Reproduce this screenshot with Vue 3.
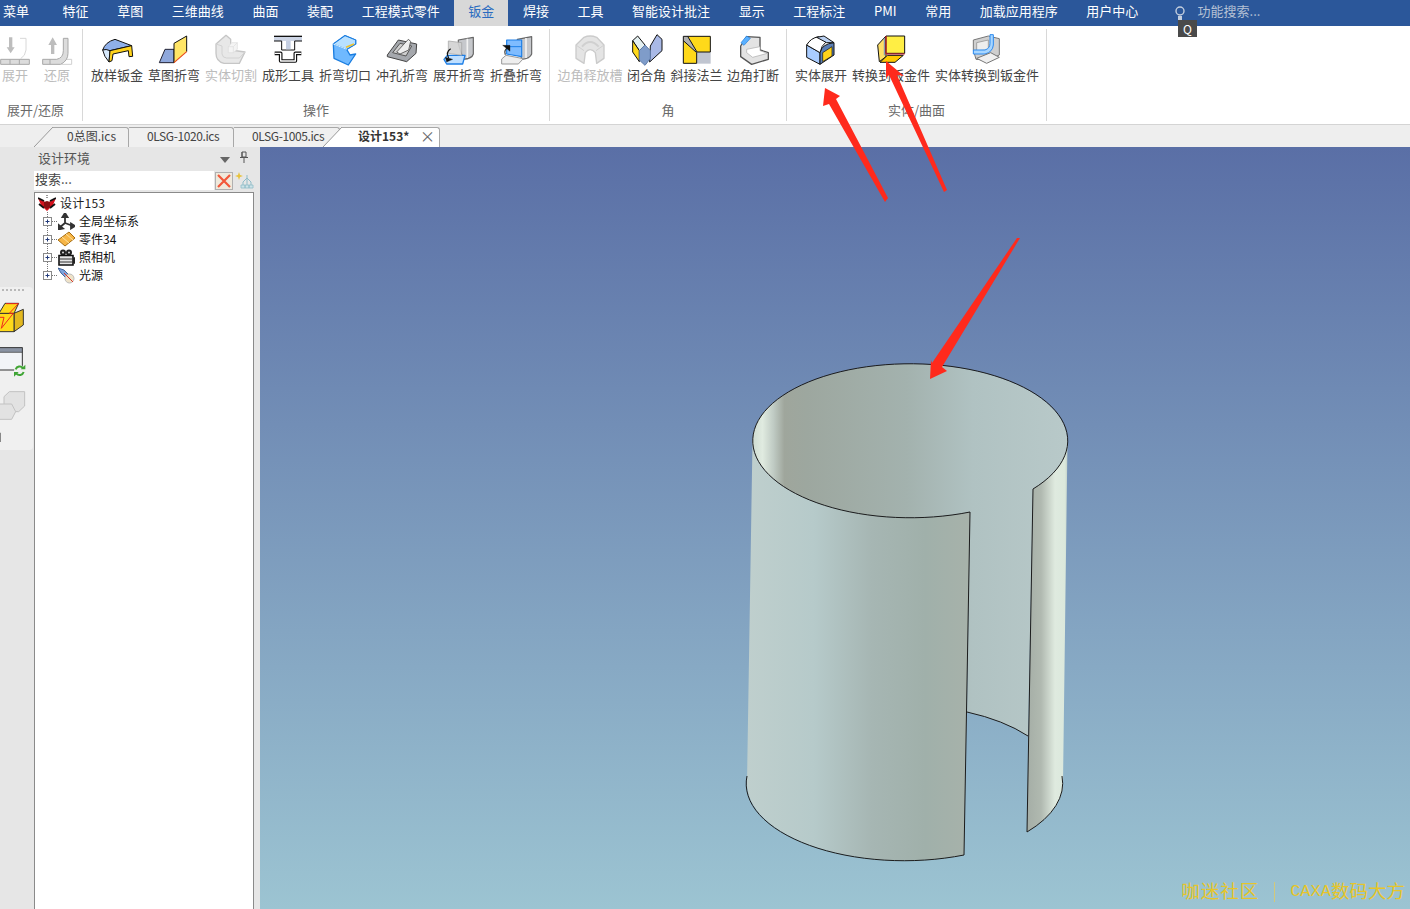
<script setup>
const p = (d, f = 'none', s = 'none', w = 3, o = 1) => ({ d, f, s, w, o })

const menus = ['特征', '草图', '三维曲线', '曲面', '装配', '工程模式零件', '钣金', '焊接', '工具', '智能设计批注', '显示', '工程标注', 'PMI', '常用', '加载应用程序', '用户中心']

const groups = [
  {
    key: 'g1', label: '展开/还原', items: [
      { t: '展开', w: 30, x: -15, off: true, i: [
        p('M27 22H37V52H44L32 70L20 52H27Z', '#bdbdbd'),
        p('M60 25H78V60Q76 78 62 86', '#fff', '#d8d8d8'),
        p('M2 88H88V103H2Z', '#dcdcdc', '#a8a8a8'),
        p('M30 88V103M58 88V103', 'none', '#a8a8a8')
      ] },
      { t: '还原', w: 30, x: 111, off: true, i: [
        p('M153 72V45H145L158 22L171 45H163V72Z', '#bdbdbd'),
        p('M185 88H215V103H185Z', '#fff', '#d0d0d0'),
        p('M190 25H204V70Q204 92 182 103H128V88H170Q190 84 190 62Z', '#dcdcdc', '#a8a8a8'),
        p('M150 88V103', 'none', '#a8a8a8')
      ] }
    ]
  },
  {
    key: 'g2', label: '操作', items: [
      { t: '放样钣金', w: 57, x: 291, i: [
        p('M308 60Q316 36 345 28L395 47L330 62Z', '#8fb0ea', '#111'),
        p('M308 60Q318 56 330 62L327 96Q312 80 308 60Z', '#d6e8fb', '#111'),
        p('M330 62L395 47L398 79L387 80L385 62L339 72L336 92L327 96Z', '#ffd31a', '#111')
      ] },
      { t: '草图折弯', w: 57, x: 462, i: [
        p('M495 58H522V98H478Z', '#8fa8dc', '#223'),
        p('M522 40L560 18V65L522 98Z', '#ffe566'),
        p('M522 98V40L560 18V65', 'none', '#111'),
        p('M522 98L560 65', 'none', '#e8491d', 3.5)
      ] },
      { t: '实体切割', w: 57, x: 33, off: true, i: [
        p('M48 42L78 16L92 28V60L135 66L118 100H72Q48 95 48 70Z', '#e8e8e8', '#c6c6c6', 4),
        p('M48 42L66 48V72Q68 84 80 84H118L135 66', 'none', '#d2d2d2'),
        p('M85 50L95 38H112V58L100 68H85ZM85 50H100V68M100 50L112 38', '#f4f4f4', '#dcdcdc', 2)
      ] },
      { t: '成形工具', w: 57, x: 204, i: [
        p('M222 19H306V33H222Z', '#cdd5e5'),
        p('M222 19H306', 'none', '#111', 4),
        p('M222 33H245V60H284V33H306', 'none', '#111', 3),
        p('M258 33H272V58H258Z', '#c5cfe2'),
        p('M224 70H242V93H286V70H304', 'none', '#111', 11),
        p('M224 70H242V93H286V70H304', 'none', '#fff', 4)
      ] },
      { t: '折弯切口', w: 57, x: 375, i: [
        p('M400 42L435 17L467 30V42L440 58L450 75L467 72L445 105L402 85Z', '#6fb9ff', '#1a7de0', 4),
        p('M400 42L435 17L467 30V42L440 58Z', '#b8e0ff', '#1a7de0', 3),
        p('M400 42L440 58', 'none', '#d4eeff', 3),
        p('M438 52L462 42', 'none', '#f0c22a', 5)
      ] },
      { t: '冲孔折弯', w: 57, x: 6, i: [
        p('M22 75L55 30L110 42L108 70L80 95L22 80Z', '#a5a8ad', '#444'),
        p('M38 68L60 40L95 48L78 78Z', '#cfcfcf', '#555'),
        p('M50 66L85 28L92 34L86 60L60 72Z', '#eee', '#666')
      ] },
      { t: '展开折弯', w: 57, x: 177, i: [
        p('M235 30L280 22V72Q276 86 250 88L235 42Z', '#c6c8cc', '#666', 3.5),
        p('M262 26V84', 'none', '#f2f2f2', 5),
        p('M192 88L202 76H255L248 102H200Z', '#bfdfff', '#1d7fe8', 4),
        p('M205 33L245 38V76L205 70Z', '#d2d2d2', '#a5a5a5', 2.5, .9),
        p('M212 56Q196 66 206 84', 'none', '#111', 3.5),
        p('M196 82L218 88L200 96Z', '#111', '#111', 1)
      ] },
      { t: '折叠折弯', w: 57, x: 348, i: [
        p('M412 28L455 20V72Q450 86 425 88L412 38Z', '#c6c8cc', '#666', 3.5),
        p('M438 24V84', 'none', '#f2f2f2', 5),
        p('M365 87L378 76L430 86L415 102H365Z', '#eee', '#999'),
        p('M380 30H425V80L380 72Z', '#7fbcff', '#1d7fe8', 3.5),
        p('M380 50H425', 'none', '#1d7fe8', 3),
        p('M386 52Q370 60 376 74', 'none', '#333', 3.5),
        p('M368 46H390V64Z', '#111', '#111', 1)
      ] }
    ]
  },
  {
    key: 'g3', label: '角', items: [
      { t: '边角释放槽', w: 65, x: 0, off: true, i: [
        p('M18 45L42 22Q60 14 80 22L102 45V85L80 100L76 68Q60 50 46 68L42 100L18 85Z', '#e4e4e4', '#cbcbcb', 4),
        p('M36 50Q60 22 86 50', 'none', '#d0d0d0', 6),
        p('M18 45L42 62M102 45L78 62', 'none', '#d0d0d0')
      ] },
      { t: '闭合角', w: 39, x: 168, i: [
        p('M185 32L200 18L222 45L205 62Z', '#e3eff0', '#111'),
        p('M185 32L205 62V95L185 66Z', '#ffd91a', '#111'),
        p('M238 48L258 14L273 28V62L236 96Z', '#a9b9e6', '#111'),
        p('M205 62L222 45L238 62V85L222 106L205 90Z', '#7f9cc9', '#5d7aa8')
      ] },
      { t: '斜接法兰', w: 52, x: 318, i: [
        p('M378 66H419V101H378Z', '#c0c5d0'),
        p('M350 19H418V66H378Z', '#ffd91a'),
        p('M337 32L377 68V100H337Z', '#ffd91a'),
        p('M337 19H350L378 66L377 68L337 32Z', '#b0b0b0'),
        p('M337 19H418V66H378M337 19V100H377V68L337 32M350 19L378 66', 'none', '#111')
      ] },
      { t: '边角打断', w: 52, x: 489, i: [
        p('M512 48L530 20L570 22V60L595 68V88L545 103L512 80Z', '#e3e3e3', '#555', 4),
        p('M530 58L570 50V62L592 70L548 82L530 68Z', '#fff', '#aaa', 2),
        p('M513 38L530 18L541 25L522 46Z', '#5ab0ff', '#1a7de0', 2)
      ] }
    ]
  },
  {
    key: 'g4', label: '实体/曲面', items: [
      { t: '实体展开', w: 52, x: 3, i: [
        p('M20 45L60 68V103L20 82Z', '#a9ccff', '#111'),
        p('M60 68Q65 42 102 38V75L60 103Z', '#5b7fb5', '#111'),
        p('M68 68L96 50V78L68 95Z', '#ffd31a', '#111', 2),
        p('M20 45Q32 24 56 20L78 36Q64 46 60 68Z', '#fff', '#111'),
        p('M50 22L72 18L102 38L80 38Z', '#b9d0f2', '#111')
      ] },
      { t: '转换到钣金件', w: 78, x: 213, i: [
        p('M233 45L258 18V80L238 95Z', '#ffe066', '#111'),
        p('M258 18H314V70H258Z', '#ffee44', '#111'),
        p('M258 18V72H314', 'none', '#d9142c', 3),
        p('M240 97L262 76H310L285 97Z', '#ffc800', '#111'),
        p('M253 24V76', 'none', '#6b8fc6', 3)
      ] },
      { t: '实体转换到钣金件', w: 104, x: 501, i: [
        p('M520 30L565 18L598 26V75L565 90L528 88L520 60Z', '#cfcfcf', '#777'),
        p('M530 38L565 30V60L530 62Z', '#eee', '#888', 2),
        p('M520 60H555Q570 55 570 40V14H580V45Q578 66 555 72H520Z', '#a8d6ff', '#2b8af0', 3),
        p('M530 85L572 68L598 82L560 100Z', '#f0f0f0', '#777')
      ] }
    ]
  }
]

const tree = [
  { t: '全局坐标系', k: 'axis' },
  { t: '零件34', k: 'part' },
  { t: '照相机', k: 'cam' },
  { t: '光源', k: 'light' }
]
</script>

<template>
  <div class="app">
    <header class="menu">
      <div class="mi first">菜单</div>
      <div v-for="m in menus" :key="m" class="mi" :class="{ active: m === '钣金' }">{{ m }}</div>
      <svg class="bulb" width="14" height="16" viewBox="0 0 14 16">
        <circle cx="7" cy="6" r="4" fill="none" stroke="#c3cede" stroke-width="1.4" />
        <path d="M5 11H9V15H5Z" fill="#c3cede" />
      </svg>
      <div class="fsearch">功能搜索...</div>
      <div class="qbadge">Q</div>
    </header>

    <section class="ribbon">
      <div v-for="g in groups" :key="g.key" class="group" :class="g.key">
        <div class="items">
          <div v-for="it in g.items" :key="it.t" class="item" :class="{ off: it.off }" :style="{ width: it.w + 'px' }">
            <svg class="ico" width="40" height="40" :viewBox="`${it.x} 0 120 120`">
              <path v-for="(s, n) in it.i" :key="n" :d="s.d" :fill="s.f" :stroke="s.s" :stroke-width="s.w" :opacity="s.o" stroke-linejoin="round" />
            </svg>
            <div class="lbl">{{ it.t }}</div>
          </div>
        </div>
        <div class="glabel">{{ g.label }}</div>
      </div>
    </section>

    <nav class="tabs">
      <svg class="slope" width="19" height="22" viewBox="0 0 19 22"><path d="M0 22L19 2V22Z" fill="#f0f0f0" /><path d="M0 22L19 2" stroke="#999" fill="none" /></svg>
      <div class="tab t1">0总图.ics</div>
      <div class="tab t2">0LSG-1020.ics</div>
      <div class="tab t3">0LSG-1005.ics</div>
      <svg class="slope s4" width="19" height="22" viewBox="0 0 19 22"><path d="M0 22L19 2V22Z" fill="#fff" /><path d="M0 22L19 2" stroke="#999" fill="none" /></svg>
      <div class="tab t4"><b>设计153*</b><span class="x">×</span></div>
    </nav>

    <main class="main">
      <aside class="strip">
        <svg class="stripsvg" width="33" height="163" viewBox="0 21 99 489">
          <path d="M6 30H74" stroke="#a5a5a5" stroke-width="5" stroke-dasharray="6 6" />
          <path d="M42 100L70 88V135L42 155Z" fill="#e3b81f" stroke="#333" stroke-width="3" />
          <path d="M-3 100H42V155H-3Z" fill="#ffd91a" stroke="#333" stroke-width="3" />
          <path d="M15 70H56L42 100H-3Z" fill="#ffd91a" stroke="#333" stroke-width="3" />
          <path d="M18 71H55L28 100H40L4 145L12 112H-3" fill="none" stroke="#ee2a1e" stroke-width="3" />
          <path d="M-3 203H67V270H-3Z" fill="#f2f4f8" stroke="#333" stroke-width="3" />
          <path d="M-3 203H67V217H-3Z" fill="#8a93a3" stroke="#333" stroke-width="2" />
          <circle cx="59" cy="272" r="17" fill="#f0f0f0" />
          <path d="M47 268A13 13 0 0 1 69 264M71 276A13 13 0 0 1 49 281" fill="none" stroke="#3fa535" stroke-width="6" />
          <path d="M62 268H76V254Z M56 276H42V290Z" fill="#3fa535" />
          <path d="M12 350L28 335H74V378L56 395H12Z" fill="#e2e2e2" stroke="#c2c2c2" stroke-width="3" />
          <path d="M-3 372H35L47 395L35 418H-3Z" fill="#e2e2e2" stroke="#c2c2c2" stroke-width="3" />
          <path d="M-3 458H3V486H-3Z" fill="#888" />
        </svg>
      </aside>

      <div class="panel">
        <div class="phead">
          <span>设计环境</span>
          <svg class="tri" width="10" height="6" viewBox="0 0 10 6"><path d="M0 0H10L5 6Z" fill="#666" /></svg>
          <svg class="pin" width="10" height="12" viewBox="0 0 10 12"><path d="M3 1H7V6H3ZM1 6.5H9M5 7V12M3 1V6" fill="none" stroke="#555" /></svg>
        </div>
        <div class="psearch">
          <div class="pinput">搜索...</div>
          <div class="pclear">
            <svg width="14" height="14" viewBox="0 0 14 14"><path d="M1 1L13 13M13 1L1 13" stroke="#f2583a" stroke-width="2.2" /></svg>
          </div>
          <svg class="pfilter" width="19" height="17" viewBox="0 0 19 17">
            <path d="M4 0L5 3L8 4L5 5L4 8L3 5L0 4L3 3Z" fill="#e8c23a" />
            <path d="M12 3V8M8 10L12 6L16 10M8 10V13M16 10V13M12 8V13" fill="none" stroke="#8fbcc8" />
            <path d="M6 13H10V16H6ZM14 13H18V16H14ZM10 13H14V16H10Z" fill="#cfe3e8" stroke="#8fbcc8" stroke-width=".8" />
          </svg>
        </div>
        <div class="tree">
          <div class="trow root">
            <svg width="18" height="17" viewBox="0 0 18 17">
              <path d="M9 0V3" stroke="#333" stroke-dasharray="1 1" />
              <path d="M0 3L9 8L18 3L15 10L9 16L3 10Z" fill="#d4101c" />
              <path d="M0 3L6 6M18 3L12 6M1 9L6 13M17 9L12 13" stroke="#111" stroke-width="1.8" fill="none" />
              <path d="M6 7L9 6L12 7V12L9 14L6 12Z" fill="#8a0d12" />
            </svg>
            <span>设计153</span>
          </div>
          <div v-for="(r, i) in tree" :key="r.t" class="trow">
            <svg class="plus" width="21" height="18" viewBox="0 0 21 18">
              <path :d="i === 3 ? 'M12.5 0V5' : 'M12.5 0V18'" stroke="#777" stroke-dasharray="1 1" fill="none" />
              <path d="M17 9.5H23" stroke="#777" stroke-dasharray="1 1" fill="none" />
              <rect x="8.5" y="5.5" width="8" height="8" fill="#fff" stroke="#8a8a8a" />
              <path d="M10.5 9.5H14.5M12.5 7.5V11.5" stroke="#223a7a" />
            </svg>
            <svg class="ticon" width="17" height="17" viewBox="0 0 17 17">
              <g v-if="r.k === 'axis'" fill="none" stroke="#333" stroke-width="1.8">
                <path d="M7 2V10L1 15M7 10L15 13" />
                <path d="M4.5 4L7 0L9.5 4Z" fill="#333" />
                <path d="M13 10.5L17 13L13 15.5Z" fill="#333" />
                <path d="M0 11.5V16.5L5 15.5Z" fill="#333" />
              </g>
              <g v-else-if="r.k === 'part'">
                <path d="M0 9L11 1L17 7L7 15Z" fill="#f6b546" stroke="#a56c10" />
                <path d="M4 6L11 12M8 3L15 9" stroke="#fde2a0" />
              </g>
              <g v-else-if="r.k === 'cam'">
                <circle cx="5" cy="3.5" r="3" fill="#222" />
                <circle cx="11" cy="3.5" r="3" fill="#222" />
                <circle cx="5" cy="3.5" r="1" fill="#ddd" />
                <circle cx="11" cy="3.5" r="1" fill="#ddd" />
                <path d="M1 6.5H15V16H1Z" fill="#e6e6e6" stroke="#111" stroke-width="1.6" />
                <path d="M1 10H15M1 13H15" stroke="#333" />
                <path d="M15 9L17 8V15L15 14Z" fill="#222" />
              </g>
              <g v-else>
                <path d="M0 1L6 3L11 8L8 11L3 6Z" fill="#7ea4dc" stroke="#274b86" stroke-width=".8" />
                <circle cx="11.5" cy="11.5" r="4.5" fill="#eee2c8" stroke="#bbb" />
                <path d="M6 6L15 15" stroke="#d9342a" />
              </g>
            </svg>
            <span>{{ r.t }}</span>
          </div>
        </div>
      </div>

      <div class="view">
        <svg class="cyl" width="1150" height="762" viewBox="260 147 1150 762">
          <defs>
            <linearGradient id="gIn" gradientUnits="userSpaceOnUse" x1="753" y1="0" x2="1067" y2="0">
              <stop offset="0" stop-color="#cfdcd2" />
              <stop offset=".03" stop-color="#e0ebe0" />
              <stop offset=".065" stop-color="#c0cbc4" />
              <stop offset=".1" stop-color="#9fa69c" />
              <stop offset=".17" stop-color="#9da79f" />
              <stop offset=".49" stop-color="#a3b2ae" />
              <stop offset=".7" stop-color="#b0c2c2" />
              <stop offset="1" stop-color="#b8c9c9" />
            </linearGradient>
            <linearGradient id="gFront" gradientUnits="userSpaceOnUse" x1="747" y1="0" x2="970" y2="0">
              <stop offset="0" stop-color="#bfcfcd" />
              <stop offset=".3" stop-color="#b6caca" />
              <stop offset=".56" stop-color="#a6b6b3" />
              <stop offset=".8" stop-color="#a0b0aa" />
              <stop offset="1" stop-color="#a7b2aa" />
            </linearGradient>
            <linearGradient id="gRight" gradientUnits="userSpaceOnUse" x1="1027" y1="0" x2="1067" y2="0">
              <stop offset="0" stop-color="#a5aea6" />
              <stop offset=".35" stop-color="#b0b9b0" />
              <stop offset=".7" stop-color="#dfeadf" />
              <stop offset=".95" stop-color="#dbe8dc" />
              <stop offset="1" stop-color="#c5d4cc" />
            </linearGradient>
          </defs>
          <path d="M752.5 441A157.5 77 0 0 1 1067.5 441A157.5 77 0 0 1 1033 489L1028 736A158 77 0 0 0 967 712L970 512A157.5 77 0 0 1 752.5 441Z" fill="url(#gIn)" />
          <path d="M752.5 441A157.5 77 0 0 0 970 512L964 855A158 77 0 0 1 747 783Z" fill="url(#gFront)" />
          <path d="M1033 489A157.5 77 0 0 0 1067.5 441L1063 783A158 77 0 0 1 1027 832Z" fill="url(#gRight)" />
          <g fill="none" stroke="#1c1c1c" stroke-width="1">
            <path d="M970 512A157.5 77 0 1 1 1033 489" />
            <path d="M970 512L964 855A158 77 0 0 1 747 776" />
            <path d="M1033 489L1027 832A158 77 0 0 0 1062 776" />
            <path d="M1028 736A158 77 0 0 0 967 712" />
          </g>
        </svg>
        <div class="wm"><span class="wa">咖迷社区</span><i></i><span class="wb">CAXA</span><span>数码大方</span></div>
      </div>
    </main>

    <svg class="arrows" width="1410" height="909" viewBox="0 0 1410 909">
      <path d="M825 88L840 96L836 99L888 198L885 202L829 104L823 106Z" fill="#ff2a1c" />
      <path d="M886 61L904 76L897 75L947 190L944 192L889 75L886 78Z" fill="#ff2a1c" />
      <path d="M930 379L931 360L932 363L1017 238H1020L942 367L947 371Z" fill="#ff2a1c" />
    </svg>
  </div>
</template>

<style scoped>
.app {
  position: relative;
  width: 1410px;
  height: 909px;
  overflow: hidden;
  display: flex;
  flex-direction: column;
  font-family: "Noto Sans CJK SC", sans-serif;
  background: #e6e6e6;
  color: #333;
}
.menu {
  position: relative;
  height: 26px;
  flex: none;
  display: flex;
  align-items: stretch;
  gap: 0.6px;
  background: #2b579a;
  color: #fff;
  font-size: 13px;
  line-height: 21px;
}
.mi {
  padding: 0 14px;
  white-space: nowrap;
}
.mi.first {
  padding: 0 19px 0 3px;
}
.mi.active {
  background: #d8d8d8;
  color: #2b6cc0;
}
.bulb {
  margin: 5px 0 0 20px;
}
.fsearch {
  margin-left: 10px;
  font-size: 13px;
  color: #b4c0d4;
}
.qbadge {
  position: absolute;
  left: 1178px;
  top: 20px;
  width: 19px;
  height: 17px;
  background: #4a4a4a;
  color: #fff;
  font-size: 12px;
  line-height: 17px;
  text-align: center;
}
.ribbon {
  height: 98px;
  flex: none;
  display: flex;
  background: #fff;
  border-bottom: 1px solid #d4d4d4;
}
.group {
  margin: 3px 0;
  display: flex;
  flex-direction: column;
  border-right: 1px solid #d8d8d8;
  box-sizing: border-box;
}
.g1 { width: 89px; margin-left: -6px; padding-left: 6px; }
.g2 { width: 467px; padding-left: 5.5px; }
.g3 { width: 237px; padding-left: 7.5px; }
.g4 { width: 260px; padding-left: 8px; }
.items {
  display: flex;
  flex: none;
}
.g1 .items { gap: 12px; }
.g3 .items { gap: 4.5px; }
.g4 .items { gap: 5px; }
.item {
  flex: none;
  display: flex;
  flex-direction: column;
  align-items: center;
}
.ico {
  display: block;
  margin-top: 1px;
  flex: none;
}
.lbl {
  font-size: 13px;
  line-height: 12px;
  margin-top: -1px;
  white-space: nowrap;
  color: #444;
}
.off .lbl {
  color: #bcbcbc;
}
.glabel {
  margin-top: auto;
  height: 16px;
  line-height: 16px;
  margin-bottom: 3px;
  font-size: 13px;
  color: #6a6a6a;
  text-align: center;
}
.g1 .glabel { margin-left: -11px; }
.g2 .glabel { margin-left: -5.5px; }
.g3 .glabel { margin-left: -7.5px; }
.g4 .glabel { margin-left: -8px; }
.tabs {
  height: 22px;
  flex: none;
  display: flex;
  align-items: flex-end;
  padding-left: 34px;
  background: #eeeeee;
}
.slope {
  flex: none;
  display: block;
}
.s4 {
  margin-left: -17px;
  position: relative;
}
.tab {
  height: 20px;
  box-sizing: border-box;
  border: 1px solid #a8a8a8;
  border-bottom: none;
  border-left: none;
  border-radius: 0 3px 0 0;
  background: #f0f0f0;
  font-size: 12px;
  line-height: 15px;
  white-space: nowrap;
  color: #444;
}
.t1 { width: 76px; padding-left: 14px; border-top-left-radius: 0; }
.t2 { width: 105px; padding-left: 18px; letter-spacing: -.4px; }
.t3 { width: 106px; padding-left: 18px; letter-spacing: -.4px; }
.t4 {
  width: 98px;
  position: relative;
  padding-left: 16px;
  background: #fff;
  color: #333;
  display: flex;
  justify-content: space-between;
}
.t4 b { font-weight: 700; }
.x {
  margin-right: 4px;
  font-size: 15px;
  color: #666;
}
.main {
  flex: 1;
  display: flex;
  min-height: 0;
}
.strip {
  width: 34px;
  flex: none;
  box-sizing: border-box;
  padding-top: 140px;
  overflow: hidden;
}
.stripsvg {
  display: block;
  background: #f0f0f0;
  border-radius: 0 4px 4px 0;
}
.panel {
  width: 220px;
  flex: none;
  display: flex;
  flex-direction: column;
  background: #e6e6e6;
  margin-right: 6px;
}
.phead {
  height: 24px;
  flex: none;
  display: flex;
  align-items: center;
  box-sizing: border-box;
  padding: 0 0 4px 4px;
  font-size: 13px;
  color: #555;
}
.tri { margin-left: auto; margin-top: 5px; }
.pin { margin: 0 5px 0 9px; }
.psearch {
  height: 19px;
  flex: none;
  display: flex;
  align-items: center;
}
.pinput {
  width: 180px;
  height: 19px;
  background: #fff;
  padding-left: 1px;
  box-sizing: border-box;
  font-size: 13px;
  line-height: 15px;
  color: #444;
}
.pclear {
  width: 18px;
  height: 18px;
  margin-left: 1px;
  box-sizing: border-box;
  border: 1px solid #b0b0b0;
  background: #efe9dc;
  display: flex;
  align-items: center;
  justify-content: center;
}
.pfilter { margin-left: 2px; }
.tree {
  flex: 1;
  margin-top: 2px;
  background: #fff;
  border: 1px solid #8a8a8a;
  border-bottom: none;
  box-sizing: border-box;
  padding-top: 1px;
  font-size: 12px;
  color: #111;
}
.trow {
  height: 18px;
  display: flex;
  align-items: center;
  line-height: 18px;
  white-space: nowrap;
}
.root {
  padding-left: 3px;
  gap: 4px;
}
.root span { color: #222; letter-spacing: .25px; }
.plus {
  flex: none;
  overflow: visible;
}
.ticon {
  margin: 0 4px 0 2px;
  flex: none;
}
.view {
  position: relative;
  flex: 1;
  background: linear-gradient(180deg, #5a6fa6 0%, #9cc4d2 100%);
}
.cyl {
  display: block;
}
.wm {
  position: absolute;
  right: 5px;
  bottom: 6px;
  display: flex;
  align-items: center;
  font-family: "Liberation Serif", "Noto Sans CJK SC", serif;
  font-size: 18.5px;
  line-height: 22px;
  color: #e6c52a;
}
.wa { letter-spacing: 1px; }
.wb { font-family: "Liberation Mono", monospace; font-size: 17px; }
.wm i {
  width: 1px;
  height: 20px;
  margin: 0 15px;
  background: #d3c87a;
}
.arrows {
  position: absolute;
  left: 0;
  top: 0;
  pointer-events: none;
}
</style>
